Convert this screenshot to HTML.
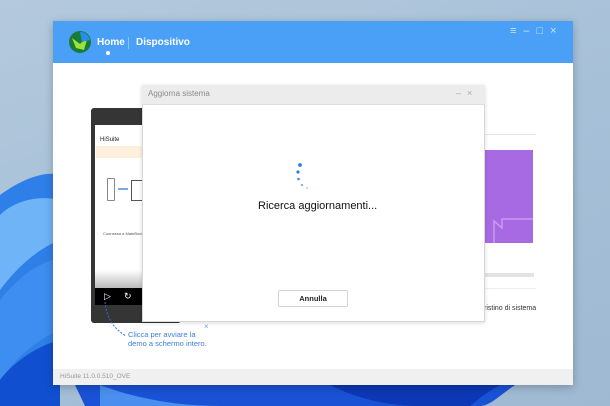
<!DOCTYPE html>
<html><head><meta charset="utf-8"><style>
*{margin:0;padding:0;box-sizing:border-box}
body{width:610px;height:406px;overflow:hidden;position:relative;font-family:"Liberation Sans",sans-serif;
background:linear-gradient(160deg,#b4c9dc 0%,#a6c0d8 50%,#9fb9d3 100%);}
.abs{position:absolute}
</style></head><body>
<svg class="abs" style="left:0;top:0" width="610" height="406">
<path d="M0 195 C20 180 45 170 60 175 L60 406 L0 406 Z" fill="#2f7fe8"/>
<path d="M0 215 C15 200 40 195 60 200 L60 240 C35 250 15 270 0 290 Z" fill="#6fb4f7"/>
<path d="M0 300 C20 275 40 262 60 258 L60 330 C35 340 15 360 0 380 Z" fill="#3d8ef0"/>
<path d="M0 380 C15 360 40 345 60 340 L60 406 L0 406 Z" fill="#0f4fd0"/>
<path d="M75 385 L515 385 C500 395 490 406 480 406 L85 406 Z" fill="#1a52d6"/>
<path d="M100 385 C140 400 180 406 220 406 L100 406 Z" fill="#4a8ff0"/>
<path d="M330 385 C350 395 380 406 420 406 L470 406 C480 398 490 390 500 385 Z" fill="#0c38b5"/>
</svg>
<div class="abs" style="left:53px;top:21px;width:520px;height:364px;background:#fff;box-shadow:0 2px 8px rgba(0,0,0,.25)"></div>
<div class="abs" style="left:53px;top:21px;width:520px;height:42px;background:#4a9ff7"></div>
<svg class="abs" style="left:68px;top:30px" width="24" height="24"><circle cx="12" cy="12" r="11" fill="#1a7a3a"/><path d="M4 8 L12 14 L20 6 L16 20 L8 18 Z" fill="#9be33a"/><path d="M12 2 A10 10 0 0 1 22 10 L14 12 Z" fill="#2a8ee8"/></svg>
<div class="abs" style="left:97px;top:37px;color:#fff;font-weight:bold;font-size:10px">Home</div>
<div class="abs" style="left:106px;top:51px;width:4px;height:4px;border-radius:50%;background:#fff"></div>
<div class="abs" style="left:128px;top:37px;width:1px;height:12px;background:#8cc2fa"></div>
<div class="abs" style="left:136px;top:37px;color:#fff;font-weight:bold;font-size:10px">Dispositivo</div>
<div class="abs" style="left:510px;top:25px;color:#cfe4fc;font-size:11px;letter-spacing:7px">≡–□×</div>
<div class="abs" style="left:484px;top:134px;width:52px;height:1px;background:#e6e6e6"></div>
<div class="abs" style="left:484px;top:150px;width:49px;height:93px;background:#a86ae2"></div>
<svg class="abs" style="left:484px;top:213px" width="49" height="30"><path d="M10 30 V8 L18 15 V6 H49" stroke="#c79af0" stroke-width="1.5" fill="none"/></svg>
<div class="abs" style="left:484px;top:273px;width:50px;height:4px;background:#e3e3e3"></div>
<div class="abs" style="left:484px;top:288px;width:52px;height:1px;background:#eee"></div>
<div class="abs" style="left:484px;top:305px;font-size:7px;color:#333">ristino di sistema</div>
<div class="abs" style="left:91px;top:108px;width:90px;height:215px;background:#353535;border-radius:3px"></div>
<div class="abs" style="left:95px;top:125px;width:60px;height:163px;background:#fff"></div>
<div class="abs" style="left:95px;top:270px;width:60px;height:18px;background:linear-gradient(#fff,#bbb)"></div>
<div class="abs" style="left:95px;top:288px;width:60px;height:17px;background:#000"></div>
<div class="abs" style="left:100px;top:137px;font-size:6px;color:#222">HiSuite</div>
<div class="abs" style="left:96px;top:146px;width:59px;height:12px;background:#fdf0dc"></div>
<div class="abs" style="left:107px;top:178px;width:8px;height:23px;border:1px solid #888;border-radius:1px"></div>
<div class="abs" style="left:118px;top:188px;width:10px;height:2px;background:#7aa9ea"></div>
<div class="abs" style="left:131px;top:180px;width:12px;height:21px;border:1px solid #555"></div>
<div class="abs" style="left:103px;top:231px;font-size:4px;color:#555">Connessa a MateBook</div>
<div class="abs" style="left:104px;top:291px;color:#fff;font-size:9px">▷</div>
<div class="abs" style="left:124px;top:291px;color:#fff;font-size:9px">↻</div>
<svg class="abs" style="left:100px;top:300px" width="40" height="40"><path d="M5 2 C6 15 12 28 26 36" stroke="#2a6fd6" stroke-width="1" stroke-dasharray="2 1.5" fill="none"/></svg>
<div class="abs" style="left:128px;top:330px;font-size:7.5px;line-height:9px;color:#3a7fdc">Clicca per avviare la<br>demo a schermo intero.</div>
<div class="abs" style="left:204px;top:322px;font-size:8px;color:#7aa9ea">×</div>
<div class="abs" style="left:53px;top:369px;width:520px;height:16px;background:#f0f0f0"></div>
<div class="abs" style="left:60px;top:373px;font-size:6.5px;color:#999">HiSuite 11.0.0.510_OVE</div>
<div class="abs" style="left:142px;top:85px;width:343px;height:237px;background:#fff;border:1px solid #d8d8d8;box-shadow:0 1px 4px rgba(0,0,0,.15)"></div>
<div class="abs" style="left:142px;top:85px;width:343px;height:20px;background:#ececec;border-bottom:1px solid #ddd"></div>
<div class="abs" style="left:148px;top:89px;font-size:8px;color:#8a8a8a">Aggiorna sistema</div>
<div class="abs" style="left:456px;top:88px;font-size:9px;color:#aaa;letter-spacing:6px">–×</div>
<svg class="abs" style="left:294px;top:160px" width="20" height="32"><circle cx="6" cy="5" r="1.9" fill="#2b7de9"/><circle cx="4" cy="12" r="1.6" fill="#2b7de9"/><circle cx="4.5" cy="19" r="1.3" fill="#3d88e8"/><circle cx="8" cy="25" r="1" fill="#5c9be8"/><circle cx="13" cy="28" r=".8" fill="#7aaee8"/></svg>
<div class="abs" style="left:258px;top:200px;font-size:11px;color:#111">Ricerca aggiornamenti...</div>
<div class="abs" style="left:278px;top:290px;width:70px;height:17px;border:1px solid #d4d4d4;border-radius:2px;font-size:7.5px;font-weight:bold;text-align:center;line-height:15px;color:#222">Annulla</div>
</body></html>
